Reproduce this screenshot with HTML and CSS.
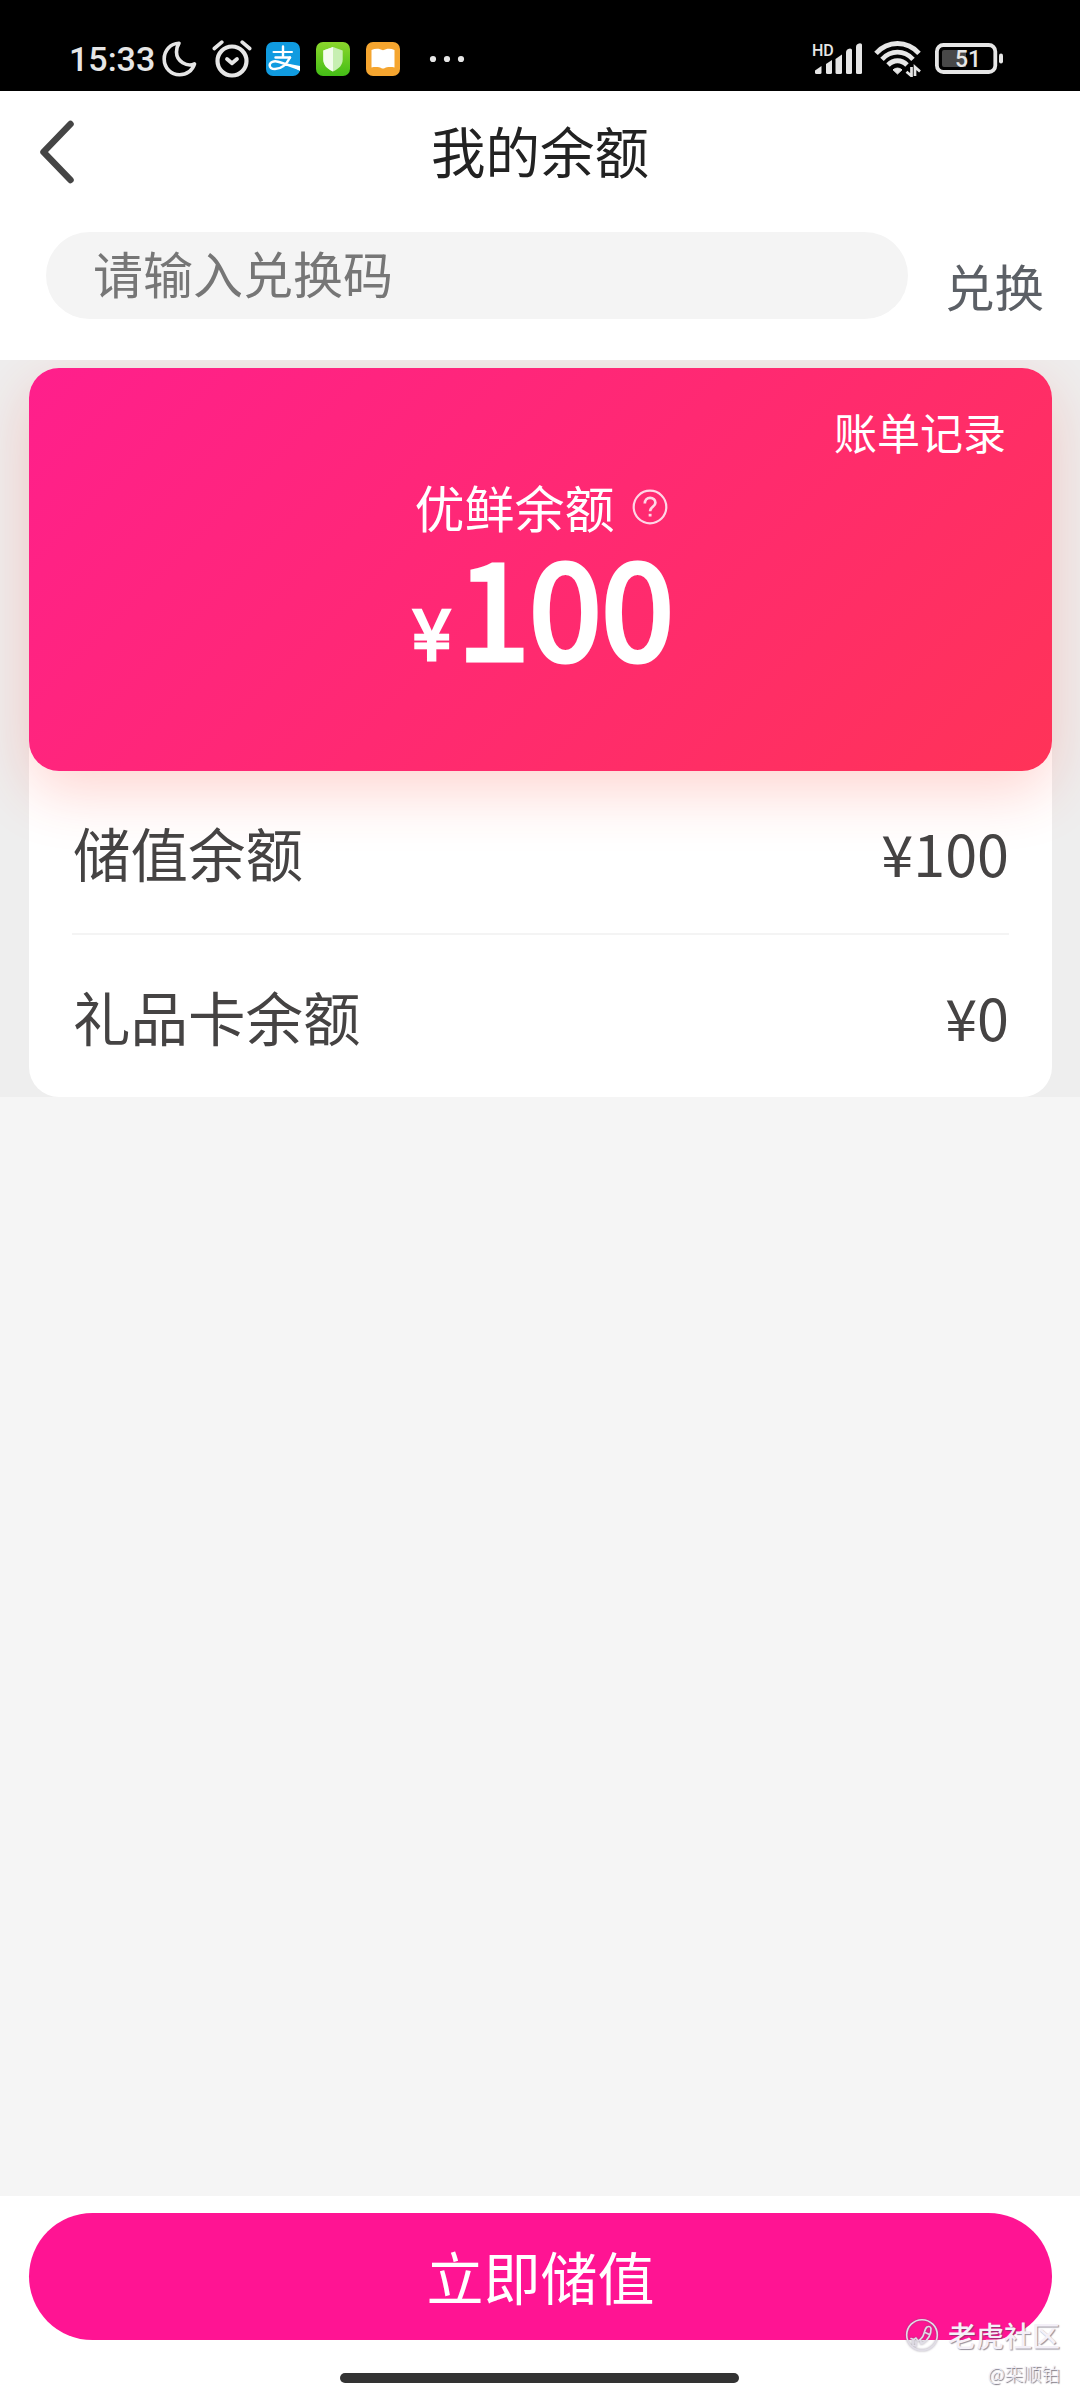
FILE: index.html
```html
<!DOCTYPE html>
<html lang="zh-CN">
<head>
<meta charset="utf-8">
<title>我的余额</title>
<link rel="stylesheet" href="styles.css">
</head>
<body>
<div class="screen">
  <div class="status">
    <span class="time">15:33</span>
    <svg class="moon" width="35" height="36" viewBox="0 0 35 36"><path d="M17 2.3C8.500 2.500 2.200 9.300 2.200 18c0 9 6.800 15.800 15.300 15.800 7.300 0 12.900-4.300 15-10.900C25 26.200 14.500 20.500 14.500 11c0-3.300.9-6.200 2.500-8.700z" fill="none" stroke="#e6e6e6" stroke-width="3.600" stroke-linejoin="round"/></svg>
    <svg class="alarm" width="40" height="38" viewBox="0 0 40 38" fill="none" stroke="#e6e6e6" stroke-linecap="round" stroke-linejoin="round"><circle cx="20" cy="21" r="14.500" stroke-width="4.200"/><path d="M2.300 8.500 9.800 2.200M37.700 8.500 30.200 2.200" stroke-width="3.600"/><path d="M15 19 20 23.300l5-4.300" stroke-width="3.800"/></svg>
    <svg class="app pay" width="34" height="34" viewBox="0 0 34 34"><rect width="34" height="34" rx="7" fill="#109be0"/><g fill="none" stroke="#fff" stroke-linecap="round"><path d="M7.500 10H26" stroke-width="2"/><path d="M17 4.500V15M9.500 15.500H24" stroke-width="2.400"/><path d="M24 15.500C20.500 22.500 15 27 9 27c-3.500 0-5.500-1.600-5.300-4 .3-3 4-4.300 8.300-3.300 6 1.300 12.500 4.500 21 7" stroke-width="2.500"/></g><path d="M21 21.500l13 2.500v5z" fill="#fff"/></svg>
    <svg class="app" width="34" height="34" viewBox="0 0 34 34"><defs><linearGradient id="leaf" x2="0" y2="1"><stop stop-color="#8bd72c"/><stop offset="1" stop-color="#43bd16"/></linearGradient></defs><rect width="34" height="34" rx="7" fill="url(#leaf)"/><path d="M17 5 26.700 8.500v9c0 5.500-4 9.500-9.700 12-5.700-2.500-9.700-6.500-9.700-12v-9z" fill="#c7efb2"/><path d="M17 5v24.500c-5.700-2.500-9.700-6.500-9.700-12v-9z" fill="#f3fced"/></svg>
    <svg class="app" width="34" height="34" viewBox="0 0 34 34"><rect width="34" height="34" rx="7" fill="#f5a52f"/><path d="M5.500 8c4-2 8-1.700 11.500.2C20.500 6.300 24.500 6 28.500 8v17.500c-4-.7-8-.5-10.500 1h-2c-2.500-1.500-6.500-1.700-10.500-1z" fill="#fff"/></svg>
    <svg class="more" width="36" height="8" viewBox="0 0 36 8" fill="#e6e6e6"><circle cx="4" cy="4" r="3.100"/><circle cx="18" cy="4" r="3.100"/><circle cx="32" cy="4" r="3.100"/></svg>
    <svg class="signal" width="52" height="34" viewBox="0 0 52 34"><text x="0" y="13.500" class="hd">HD</text><g fill="#e6e6e6"><path d="M3 28.500 9.500 24v6.500Q9.500 32 8 32H4.500Q3 32 3 30.500z"/><path d="M14 22l6-4v12.500Q20 32 18.500 32h-3Q14 32 14 30.500z"/><path d="M23.500 17l6.500-4.500v18Q30 32 28.500 32H25q-1.500 0-1.500-1.500z"/><path d="M34 10.500Q34 7 38 6.500q2 0 2 1.500v22.500q0 1.500-1.500 1.500h-3Q34 32 34 30.500z"/><path d="M44 5Q44 2 48 1.300q2 0 2 1.500v27.700q0 1.500-1.500 1.500h-3Q44 32 44 30.500z"/></g></svg>
    <svg class="wifi" width="48" height="36" viewBox="0 0 48 36"><g fill="none" stroke="#e6e6e6" stroke-width="4.800"><path d="M2 12.300C14-.8 33-.8 45 12.300"/><path d="M8 18.300c9-9.500 22-9.500 31 0"/><path d="M14 24c5.500-5.700 13.500-5.700 19 0"/></g><path d="M23.500 33 19 28.800q4.500-3.500 9 0z" fill="#e6e6e6" stroke="#e6e6e6" stroke-linejoin="round"/><path d="M37.500 26v9l-5-4.300M41 35v-9l5 4.500" fill="none" stroke="#e6e6e6" stroke-width="2.700"/></svg>
    <svg class="battery" width="69" height="32" viewBox="0 0 69 32"><rect x="1.900" y="2" width="58.400" height="27" rx="6.500" fill="none" stroke="#e6e6e6" stroke-width="3.800"/><path d="M9 7h22v17H9q-2 0-2-2V9q0-2 2-2z" fill="#484848"/><rect x="64" y="10.500" width="4" height="10" rx="2" fill="#e6e6e6"/><text x="20" y="24" class="level">51</text></svg>
  </div>

  <div class="titlebar">
    <svg class="back" width="38" height="64" viewBox="0 0 38 64"><path d="M32.500 4 5.500 32l27 28" fill="none" stroke="#454545" stroke-width="6.500" stroke-linecap="round" stroke-linejoin="round"/></svg>
    <h1>我的余额</h1>
  </div>

  <div class="redeem">
    <div class="field">请输入兑换码</div>
    <div class="redeem-action">兑换</div>
  </div>

  <div class="wallet">
    <div class="panel">
      <div class="card">
        <div class="bill">账单记录</div>
        <div class="caption">优鲜余额
          <svg class="help" width="36" height="36" viewBox="0 0 36 36" fill="none" stroke="#ffd6e6"><circle cx="18" cy="18" r="16.300" stroke-width="2.200"/><path d="M12.800 14.500c0-3.500 2.200-5.700 5.300-5.700s5.300 2 5.300 4.900c0 4-5.300 4.300-5.300 8.600" stroke-width="2.700"/><path d="M18.100 24.800v2.700" stroke-width="2.900"/></svg>
        </div>
        <div class="amount"><span class="yen">¥</span><span class="figure">100</span></div>
      </div>
      <div class="row"><span>储值余额</span><span>¥100</span></div>
      <div class="row"><span>礼品卡余额</span><span>¥0</span></div>
    </div>
  </div>

  <div class="bottom">
    <div class="topup">立即储值</div>
    <div class="home"></div>
    <div class="mark">
      <div class="brand">
        <svg width="34" height="34" viewBox="0 0 34 34" fill="none" stroke="#e0dde6" stroke-linejoin="round" stroke-linecap="round"><circle cx="17" cy="17" r="15.300" stroke-width="1.600"/><path d="M16.500 20c3-2 2.500-9 5.500-11q3-1.500 4 1.500c.5 5-3 12-8.500 15l-3-3.500zM20 14.500l4.500 2M6 20.500l3 1 2-1.500 2 3 2.500-2 .5 5M8 21.500v6l3 .5v-4" stroke-width="1.600"/></svg>
        <span>老虎社区</span>
      </div>
      <div class="author">@栾顺铂</div>
    </div>
  </div>
</div>
</body>
</html>
```
FILE: styles.css
```css
* { box-sizing: border-box; }
body {
  margin: 0;
  font-family: "Noto Sans CJK SC", sans-serif;
  background: #f5f5f5;
}
.screen {
  width: 1080px;
  height: 2400px;
  display: flex;
  flex-direction: column;
  overflow: hidden;
}
svg { display: block; flex: none; }

.status {
  height: 91px;
  flex: none;
  background: #000;
  display: flex;
  align-items: flex-start;
  padding: 41px 76px 0 69px;
}
.time {
  width: 93px;
  font: 500 34px/37px Roboto, sans-serif;
  color: #e6e6e6;
  white-space: nowrap;
}
.alarm { margin: -1px 0 0 15px; }
.app { margin: 1px 0 0 16px; }
.pay { margin-left: 14px; }
.more { margin: 14px 0 0 29px; }
.signal { margin: 1px 1px 0 auto; }
.wifi { margin-left: 9px; }
.battery { margin: 2px 0 0 13px; }
.hd { font: 500 16px Roboto, sans-serif; fill: #e6e6e6; }
.level { font: 500 23px Roboto, sans-serif; fill: #e6e6e6; }

.titlebar {
  height: 117px;
  flex: none;
  background: #fff;
  display: grid;
  grid-template-columns: 200px 1fr 200px;
  align-items: center;
}
.back { margin: 4px 0 0 38px; }
.titlebar h1 {
  margin: 0;
  text-align: center;
  font-size: 54.500px;
  line-height: 80px;
  font-weight: 400;
  color: #222;
}

.redeem {
  height: 152px;
  flex: none;
  background: #fff;
  display: flex;
  align-items: flex-start;
  padding: 24px 35px 0 46px;
}
.field {
  width: 862px;
  height: 87px;
  border-radius: 44px;
  background: #f4f4f4;
  padding-left: 47px;
  font-size: 50px;
  line-height: 80px;
  color: #767676;
}
.redeem-action {
  margin: 14px 0 0 37px;
  font-size: 49.500px;
  line-height: 80px;
  color: #5c6066;
}

.wallet {
  height: 737px;
  flex: none;
  background: #eee;
  padding: 8px 28px 0 29px;
  overflow: hidden;
}
.panel {
  height: 729px;
  background: #fff;
  border-radius: 30px;
}
.card {
  height: 403px;
  border-radius: 30px;
  background: linear-gradient(135deg, #ff1f8c, #ff3358);
  box-shadow: 0 20px 60px rgba(255, 60, 40, .22);
  color: #fff;
  display: flex;
  flex-direction: column;
  align-items: center;
}
.bill {
  align-self: flex-end;
  margin: 33px 46px 0 0;
  font-size: 43px;
  line-height: 60px;
}
.caption {
  display: flex;
  align-items: center;
  gap: 17px;
  margin: 10px 0 0 1px;
  font-size: 50px;
  line-height: 70px;
}
.help { margin-top: 2px; }
.amount {
  display: flex;
  align-items: baseline;
  height: 130px;
  line-height: 125px;
  margin-left: 5px;
}
.yen { font-size: 70px; -webkit-text-stroke: 3px #fff; margin-right: 6px; }
.figure { font-size: 130px; -webkit-text-stroke: 5px #fff; }
.row {
  height: 163px;
  margin: 0 43px;
  padding: 0 0 2px 1px;
  display: flex;
  align-items: center;
  justify-content: space-between;
  font-size: 57.500px;
  line-height: 84px;
  color: #454343;
}
.row + .row {
  border-top: 2px solid #f4f4f4;
  margin-top: -1px;
  height: 164px;
  padding-bottom: 0;
}

.bottom {
  position: relative;
  margin-top: auto;
  height: 204px;
  background: #fff;
  padding: 17px 28px 0 29px;
}
.topup {
  height: 127px;
  border-radius: 64px;
  background: #ff1493;
  color: #fff;
  text-align: center;
  font-size: 57px;
  line-height: 125px;
}
.home {
  width: 399px;
  height: 10px;
  border-radius: 5px;
  background: #333;
  margin: 33px auto 0 311px;
}
.mark {
  position: absolute;
  right: 20px;
  bottom: 14px;
  display: flex;
  flex-direction: column;
  align-items: flex-end;
  color: #f4f0f8;
}
.brand {
  display: flex;
  align-items: center;
  gap: 9px;
  font-size: 28px;
  font-weight: 500;
  line-height: 40px;
  text-shadow: 1px 1px 1px rgba(80, 70, 90, .6);
}
.brand svg { filter: drop-shadow(0 0 1px rgba(100, 90, 110, .6)); }
.author {
  font-size: 18.500px;
  line-height: 26px;
  margin-top: 5px;
  font-weight: 300;
  text-shadow: 1px 1px 1px rgba(70, 65, 80, .85);
}
```
